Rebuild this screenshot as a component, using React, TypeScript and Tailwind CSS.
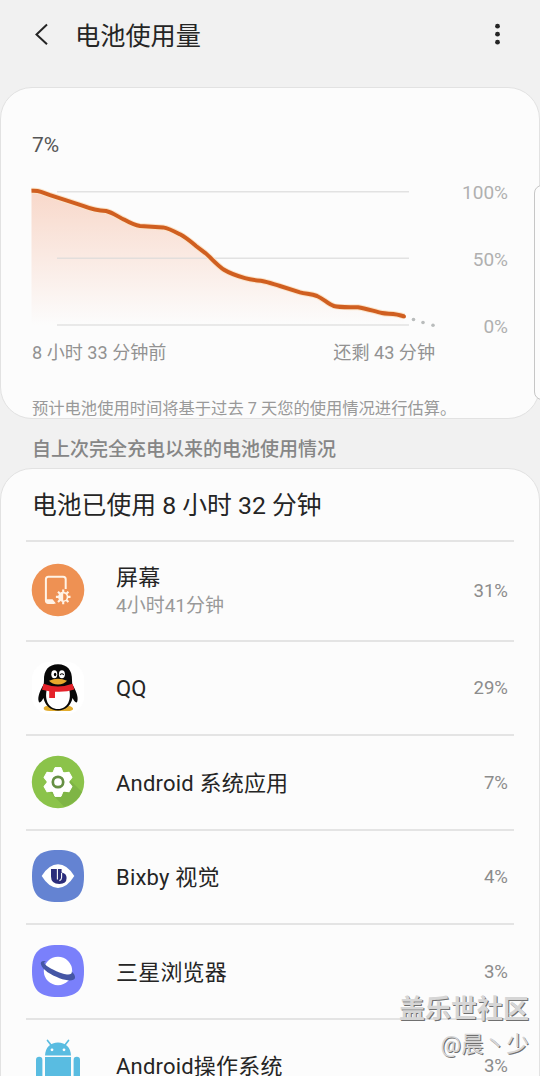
import { ReactNode } from "react";

interface AppUsage {
  name: string;
  detail?: string;
  percent: string;
  icon: ReactNode;
}

const LINE =
  "M0.5 5.8C4 5.6 7 5.8 10 6.8L19 10.2L36 15.6L52 20.8C62 24.6 68 25.6 75 26C82 27.5 87 32 93 34.6C99 38 103 40.2 109 41L132 42.4C138 43.4 142 45.6 149 49.3C155 52.5 159 56 165 61L174 67.8C180 72.8 186 80.3 193 84.8C199 88.5 207 91.2 214 93.2C220 94.8 225 95.3 231 96C237 97 242 99 249 101L269 107.3C275 109 280 108.8 286 111C292 113.5 297 118.8 303 121C308 122.6 315 122.2 327 122.2C335 123.5 344 126.5 351 128C357 129.2 364 127.8 373 131.4";

const USAGE: AppUsage[] = [
  { name: "屏幕", detail: "4小时41分钟", percent: "31%", icon: <ScreenIcon /> },
  { name: "QQ", percent: "29%", icon: <QQIcon /> },
  { name: "Android 系统应用", percent: "7%", icon: <GearIcon /> },
  { name: "Bixby 视觉", percent: "4%", icon: <BixbyIcon /> },
  { name: "三星浏览器", percent: "3%", icon: <BrowserIcon /> },
  { name: "Android操作系统", percent: "3%", icon: <AndroidIcon /> },
];

function ScreenIcon() {
  return (
    <svg viewBox="0 0 54 54" className="size-[54px] -mt-[2px]">
      <circle cx="27" cy="27" r="26.3" fill="#ee9153" />
      <path d="M34.7 26V16.2Q34.7 13.7 32.2 13.7H17.4Q14.9 13.7 14.9 16.2V37.6Q14.9 40 17.4 40H23.5" fill="none" stroke="#fff3e6" strokeWidth="2" />
      <path d="M15.2 36.3H21.5L25 40.5H17Q15.2 40.5 15.2 38.6Z" fill="#fff3e6" />
      <g transform="translate(32.2 33.9)">
        <g stroke="#fff3e6" strokeWidth="2.1">
          <path d="M0-7.3V7.3M-7.3 0H7.3M-5.2-5.2L5.2 5.2M5.2-5.2L-5.2 5.2" />
        </g>
        <circle r="4.3" fill="#ee9153" stroke="#fff3e6" strokeWidth="1.6" />
        <path d="M0-4.3A4.3 4.3 0 0 0 0 4.3Z" fill="#fff3e6" />
      </g>
    </svg>
  );
}

function QQIcon() {
  return (
    <svg viewBox="0 0 54 54" className="size-[54px]">
      <rect x="1" y="1" width="52" height="52" rx="17" fill="#fff" />
      <path d="M12.7 46.8Q14 44 21 45H33Q40 43.8 42 47.2Q43 50.2 35 50H19Q12 50 12.7 46.8Z" fill="#e2ac2e" />
      <path d="M27 3.2C17.5 3.2 12.7 9.5 13 19L12.8 23C9.5 29 6.4 35.5 7.6 40C8.4 43.3 10.5 40.5 12.5 37C14 44.5 19.4 49.5 27 49.5S40 44.5 41.5 37C43.5 40.5 45.6 43.3 46.4 40C47.6 35.5 44.5 29 41.2 23L41 19C41.3 9.5 36.5 3.2 27 3.2Z" fill="#080808" />
      <path d="M16.2 27Q27 31 37.8 27C41 38 37 48 27 48S13 38 16.2 27Z" fill="#fff" />
      <ellipse cx="23.3" cy="13.3" rx="3" ry="4" fill="#fff" />
      <ellipse cx="30.9" cy="13.3" rx="3" ry="4" fill="#fff" />
      <ellipse cx="24.1" cy="13.5" rx="1.2" ry="1.8" />
      <path d="M29 14Q31 11.5 32.8 14" fill="none" stroke="#111" strokeWidth="1.1" />
      <path d="M18 19.8Q27 15.5 36 19.8Q33 23.4 27 23.4T18 19.8Z" fill="#e8a72c" />
      <path d="M12.5 22.8Q27 28.2 41.5 22.8L43.3 28.5Q35 31.4 24 30.7V37H18.2V30.2L11 28.7Z" fill="#e5222a" />
    </svg>
  );
}

function GearIcon() {
  return (
    <svg viewBox="0 0 54 54" className="size-[54px]">
      <circle cx="27" cy="27" r="26.2" fill="#8bc34a" />
      <path d="M17 35L33 51.5A26 26 0 0 0 51 37L39 25Z" fill="#7fb545" />
      <g transform="translate(27 27)" fill="#fff">
        <circle r="11.2" />
        {[0, 60, 120, 180, 240, 300].map((angle) => (
          <path key={angle} d="M-5.2-9L-3-14.4H3L5.2-9Z" stroke="#fff" strokeWidth="1" strokeLinejoin="round" transform={`rotate(${angle})`} />
        ))}
        <circle r="5.2" stroke="#669044" strokeWidth="2.7" />
      </g>
    </svg>
  );
}

// Rounded "squircle" base shared by the Samsung apps
const SQUIRCLE = "M27 1C46 1 53 8 53 27S46 53 27 53S1 46 1 27S8 1 27 1Z";

function BixbyIcon() {
  return (
    <svg viewBox="0 0 54 54" className="size-[54px] -mt-[2px]">
      <path d={SQUIRCLE} fill="#6483d2" />
      <path d="M10.7 27Q18 15.3 27 15.3T43.3 27Q36 38.9 27 38.9T10.7 27Z" fill="#fff" />
      <path d="M20 20H30.6V23.6Q35.6 24.5 35.6 29Q35.6 34.9 28.4 34.9Q20 34.9 20 27.5Z" fill="#2b2d7b" />
      <path d="M26.4 19.5V30.4" stroke="#fff" strokeWidth="1.1" />
      <path d="M30.6 24V28.6Q30.5 31 28.4 31.6" fill="none" stroke="#fff" strokeWidth="1.1" />
    </svg>
  );
}

function BrowserIcon() {
  return (
    <svg viewBox="0 0 54 54" className="size-[54px]">
      <path d={SQUIRCLE} fill="#7a80fb" />
      <circle cx="27" cy="27" r="14.2" fill="#fff" />
      <path d="M15.2 17.2C11 16.2 9 17.8 10 20.6C11.5 26 20 31 28.5 34.2C36 37 43.3 37.3 44 34C44.4 32 43 29.5 40.8 27.4C41.3 30.4 38 31.4 31.5 29.5C23.5 27 14.5 22 13.3 19.3C13 18.3 13.8 17.6 15.2 17.2Z" fill="#4556a5" />
    </svg>
  );
}

function AndroidIcon() {
  return (
    <svg viewBox="0 0 54 54" className="size-[54px]" fill="#59bce1">
      <path d="M14 16.5C14.3 8.5 19.5 3.5 27 3.5S39.7 8.5 40 16.5Z" />
      <path d="M20 6L16.5 1.5M34 6L37.5 1.5" stroke="#59bce1" strokeWidth="1.7" strokeLinecap="round" />
      <circle cx="21" cy="10.8" r="1.4" fill="#fff" />
      <circle cx="33" cy="10.8" r="1.4" fill="#fff" />
      <path d="M14 18H40V54H14Z" />
      <rect x="5" y="17.8" width="6.4" height="30" rx="3.2" />
      <rect x="42.6" y="17.8" width="6.4" height="30" rx="3.2" />
    </svg>
  );
}

function Header() {
  return (
    <header className="h-[87px] flex items-start text-[#252525]">
      <button aria-label="返回" className="ml-[34px] mt-[23px]">
        <svg viewBox="0 0 15 23" className="w-[15px] h-[23px]" fill="none" stroke="currentColor" strokeWidth="2">
          <path d="M13 1.5L2.5 11.4L13 21.2" />
        </svg>
      </button>
      <h1 className="ml-[26px] mt-[19px] text-[25.2px] leading-9">电池使用量</h1>
      <button aria-label="更多" className="ml-auto mr-[40px] mt-[23px]">
        <svg viewBox="0 0 5 23" className="w-[5px] h-[23px]" fill="currentColor">
          <circle cx="2.5" cy="3.2" r="2.4" />
          <circle cx="2.5" cy="11.2" r="2.4" />
          <circle cx="2.5" cy="19.2" r="2.4" />
        </svg>
      </button>
    </header>
  );
}

function BatteryChart() {
  return (
    <svg viewBox="0 0 410 146" className="w-[410px] h-[146px] shrink-0">
      <defs>
        <linearGradient id="fill" x1="0" y1="0" x2="0" y2="1">
          <stop offset="0" stopColor="#f8d8ca" />
          <stop offset="1" stopColor="#fcfcfc" />
        </linearGradient>
      </defs>
      <path d={`${LINE}V140H0.5Z`} fill="url(#fill)" />
      <path d="M26 6.7H378M26 73.3H378M26 140H378" stroke="#d9d9d9" strokeOpacity="0.75" strokeWidth="1.4" />
      <path d={LINE} fill="none" stroke="#fbe3c8" strokeWidth="6" />
      <path d={LINE} fill="none" stroke="#d05f20" strokeWidth="4" />
      <circle cx="373" cy="131.4" r="2" fill="#d05f20" />
      <g fill="#b9bcbc">
        <circle cx="382.5" cy="134.5" r="1.8" />
        <circle cx="392" cy="137.5" r="1.8" />
        <circle cx="402" cy="140.3" r="1.8" />
      </g>
    </svg>
  );
}

function ChartCard() {
  return (
    <section className="h-[332px] rounded-[32px] border border-[#e2e2e2] bg-[#fcfcfc] pl-[30px]">
      <p className="mt-[43px] pl-[1px] text-[21px] leading-7 text-[#555]">7%</p>
      <div className="mt-[26px] flex">
        <BatteryChart />
        <div className="w-[67px] flex flex-col justify-between -mt-[4px] -mb-[8px] text-right text-[19px] leading-6 text-[#b0b0b0]">
          <span>100%</span>
          <span>50%</span>
          <span>0%</span>
        </div>
      </div>
      <div className="mt-[10px] pl-[1px] w-[404px] flex justify-between text-[18.1px] leading-6 text-[#929292]">
        <span>8 小时 33 分钟前</span>
        <span>还剩 43 分钟</span>
      </div>
      <p className="mt-[32px] pl-[1px] text-[16.3px] leading-6 whitespace-nowrap text-[#999]">
        预计电池使用时间将基于过去 7 天您的使用情况进行估算。
      </p>
    </section>
  );
}

function UsageRow({ app }: { app: AppUsage }) {
  return (
    <li
      className={`flex items-center border-t-2 border-[#e4e4e4] pl-[5px] pr-[6px] ${
        app.detail ? "h-[99.5px]" : "h-[94.5px]"
      }`}
    >
      {app.icon}
      <div className="ml-[31px] mt-[2px] flex-1">
        <div className="text-[22px] leading-[29px] tracking-[0.2px] text-[#252525]">{app.name}</div>
        {app.detail && <div className="text-[19px] leading-7 text-[#999]">{app.detail}</div>}
      </div>
      <span className="mt-[3px] text-[18.6px] text-[#8c8c8c]">{app.percent}</span>
    </li>
  );
}

export default function App() {
  return (
    <div className="relative w-[540px] h-[1076px] overflow-hidden bg-[#f1f1f1] font-[Roboto,'Noto_Sans_CJK_SC',sans-serif]">
      <Header />
      <ChartCard />
      <h2 className="h-[49px] pl-8 pt-[16px] text-[19px] leading-[30px] font-medium text-[#868686]">
        自上次完全充电以来的电池使用情况
      </h2>
      <section className="h-[640px] rounded-t-[32px] border border-[#e2e2e2] bg-[#fcfcfc] px-[25px]">
        <h3 className="h-[71px] pl-[6px] pt-[19px] text-[24.8px] leading-9 text-[#252525]">
          电池已使用 8 小时 32 分钟
        </h3>
        <ul>
          {USAGE.map((app) => (
            <UsageRow key={app.name} app={app} />
          ))}
        </ul>
      </section>

      {/* Edge panel handle, cut off by the right side of the screen */}
      <div className="absolute left-[534px] top-[185px] w-5 h-[215px] rounded-[8px] border border-[#c6c6c6] bg-[#fcfcfc]" />

      {/* Embossed watermark */}
      <div className="absolute right-[11px] top-[991px] text-right whitespace-nowrap text-[#d6d6d6] [text-shadow:1px_1px_0_#707070]">
        <div className="text-[26px] leading-[36px] font-bold">盖乐世社区</div>
        <div className="text-[22.7px] leading-[36px]">@晨丶少</div>
      </div>
    </div>
  );
}
